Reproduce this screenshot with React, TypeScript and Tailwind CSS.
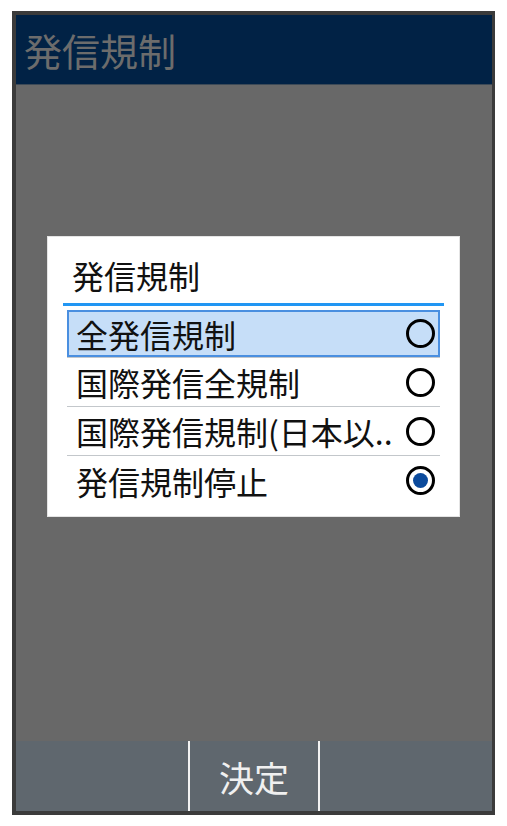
import React, { useState } from 'react';

// 発信規制の選択肢
const OPTIONS: string[] = [
  '全発信規制',
  '国際発信全規制',
  '国際発信規制(日本以..',
  '発信規制停止',
];

const FONT = "font-['Noto_Sans_CJK_JP','Noto_Sans',sans-serif]";

const Radio: React.FC<{ checked: boolean }> = ({ checked }) => (
  <div className="w-[29px] h-[29px] rounded-full border-[3px] border-black flex items-center justify-center shrink-0">
    {checked && <div className="w-[15px] h-[15px] rounded-full bg-[#0b4a9c]" />}
  </div>
);

const App: React.FC = () => {
  const [focused] = useState<number>(0);
  const [selected, setSelected] = useState<number>(3);

  return (
    <div className={`w-[507px] h-[826px] bg-white pt-[11px] pl-[12px] ${FONT}`}>
      <div className="w-[483px] h-[804px] border-t-4 border-b-4 border-l-4 border-r-[3px] border-[#3b3b3b] flex flex-col">
        {/* En-tête */}
        <div className="h-[70px] bg-[#012245] flex items-center pl-[8px] border-b border-[#3d4a57]">
          <span className="text-[38px] leading-none text-[#6c6c6c]">発信規制</span>
        </div>

        {/* Contenu */}
        <div className="flex-1 bg-[#686868] pt-[151px] pl-[31px]">
          <div className="w-[413px] h-[281px] bg-white border border-[#e4e4e4] flex flex-col">
            <div className="h-[66px] flex items-center pl-[24px] pt-[10px]">
              <span className="text-[32px] leading-none text-[#111]">発信規制</span>
            </div>
            <div className="mx-[15px] h-[3px] bg-[#2196f3]" />
            <div className="mx-[19px] mt-[4px] flex flex-col">
              {OPTIONS.map((label, i) => (
                <div
                  key={label}
                  onClick={() => setSelected(i)}
                  className={`flex items-center justify-between pl-[9px] pr-[5px] ${
                    i === 0 ? 'h-[48px]' : 'h-[49px]'
                  } ${i < OPTIONS.length - 1 ? 'border-b border-[#c3c7cb]' : ''}`}
                >
                  <div
                    className={`flex-1 h-full flex items-center justify-between ${
                      focused === i
                        ? 'bg-[#c6def8] border-2 border-[#4a8fe0] -ml-[9px] -mr-[5px] pl-[7px] pr-[3px]'
                        : ''
                    }`}
                  >
                    <span className="text-[32px] leading-none text-[#111] whitespace-nowrap">{label}</span>
                    <Radio checked={selected === i} />
                  </div>
                </div>
              ))}
            </div>
          </div>
        </div>

        {/* Barre du bas */}
        <div className="h-[70px] bg-[#5f676e] flex">
          <div className="w-[174px] border-r-2 border-[#f2f2f2]" />
          <div className="w-[130px] flex items-center justify-center border-r-2 border-[#f2f2f2]">
            <span className="text-[35px] leading-none text-[#f0f0f0]">決定</span>
          </div>
          <div className="flex-1" />
        </div>
      </div>
    </div>
  );
};

export default App;
